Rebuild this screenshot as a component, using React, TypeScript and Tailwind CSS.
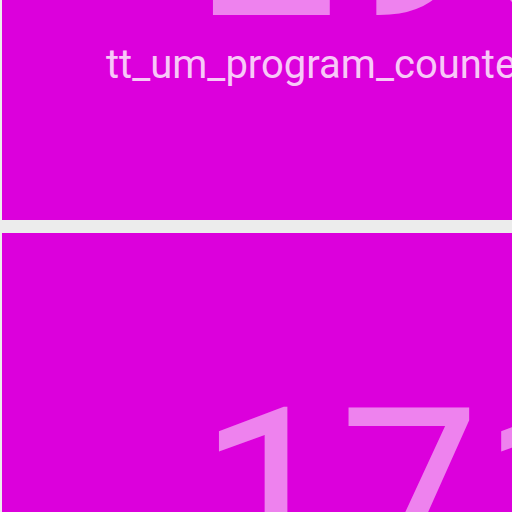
import React from 'react';

const tiles = [
  { value: '290', label: 'tt_um_program_counter' },
  { value: '171', label: 'tt_um_program_counter' },
];

function StatTile({ value, label }: { value: string; label: string }) {
  return (
    <div className="flex h-[558px] w-[700px] shrink-0 flex-col bg-[#dc00dc] pl-[104px] pt-[142px]">
      <div className="whitespace-nowrap pl-[92px] text-[251px] leading-none text-[#ee82ee]">
        {value}
      </div>
      <div className="-mt-[10px] whitespace-nowrap text-[40px] leading-none text-[#f8c8f8]">
        {label}
      </div>
    </div>
  );
}

export default function App() {
  return (
    <div
      className="h-[512px] w-[512px] overflow-hidden bg-[#ececec] pl-[2px]"
      style={{ fontFamily: 'Roboto, sans-serif' }}
    >
      <div className="-mt-[338px] flex flex-col gap-[13px]">
        {tiles.map((t, i) => (
          <StatTile key={i} value={t.value} label={t.label} />
        ))}
      </div>
    </div>
  );
}
